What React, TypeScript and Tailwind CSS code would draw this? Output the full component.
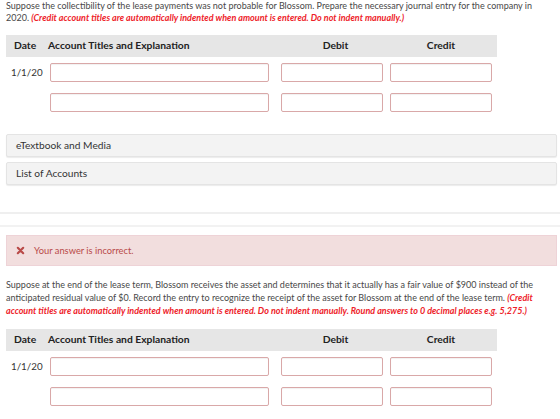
const inputCls =
  "h-[19px] rounded-[2px] border border-[#d9a8a8] bg-white shadow-[inset_0_1px_1px_rgba(0,0,0,0.06)]";

function JournalTable() {
  const rows = ["1/1/20", ""];
  return (
    <div className="w-[491px]">
      <div className="flex h-[22px] items-center bg-[#e6e6e6] text-[10.3px] font-bold text-[#222]">
        <div className="w-[42px] pl-[8px]">Date</div>
        <div className="w-[233px]">Account Titles and Explanation</div>
        <div className="w-[109px] text-center">Debit</div>
        <div className="w-[102px] text-center">Credit</div>
      </div>
      <div className="flex flex-col gap-[11px] pt-[6px]">
        {rows.map((d, i) => (
          <div key={i} className="flex items-center">
            <div className="w-[44px] pl-[5px] text-[9.8px] text-[#333]">{d}</div>
            <div className={`${inputCls} w-[219px]`} />
            <div className={`${inputCls} ml-[12px] w-[102px]`} />
            <div className={`${inputCls} ml-[7px] w-[102px]`} />
          </div>
        ))}
      </div>
    </div>
  );
}

function LinkBox({ label }: { label: string }) {
  return (
    <div className="flex h-[23px] items-center rounded-[2px] border border-[#e4e4e4] bg-[#f3f3f3] pl-[9px] text-[10.2px] text-[#333] shadow-[0_1px_1px_rgba(0,0,0,0.08)]">
      {label}
    </div>
  );
}

export default function App() {
  return (
    <div className="h-[419px] w-[560px] overflow-hidden bg-white font-['Lato',sans-serif] leading-[11.5px]">
      <div className="px-[6px] text-[9px] leading-[11.5px] text-[#484848]">
        Suppose the collectibility of the lease payments was not probable for Blossom. Prepare the
        necessary journal entry for the company in 2020.{" "}
        <span className="font-bold italic text-[#ee2229]">
          (Credit account titles are automatically indented when amount is entered. Do not indent
          manually.)
        </span>
      </div>

      <div className="mt-[12px] px-[6px]">
        <JournalTable />
      </div>

      <div className="mt-[22px] flex flex-col gap-[5px] px-[6px] pr-[3px]">
        <LinkBox label="eTextbook and Media" />
        <LinkBox label="List of Accounts" />
      </div>

      <div className="mt-[27px] h-[2px] bg-[#efefef]" />
      <div className="mt-[11px] h-[2px] bg-[#f2f2f2]" />

      <div className="mx-[6px] mr-[3px] mt-[8px] flex h-[31px] items-center border border-[#eed3d7] bg-[#f2dede] pl-[9px] text-[9.3px] text-[#b94a48]">
        <svg viewBox="0 0 10 10" className="mr-[9px] h-[9px] w-[9px]">
          <path d="M2 2 L8 8 M8 2 L2 8" stroke="#b94a48" strokeWidth="2.4" strokeLinecap="round" />
        </svg>
        Your answer is incorrect.
      </div>

      <div className="mt-[12px] px-[6px] text-[9px] leading-[13px] text-[#484848]">
        Suppose at the end of the lease term, Blossom receives the asset and determines that it
        actually has a fair value of $900 instead of the anticipated residual value of $0. Record
        the entry to recognize the receipt of the asset for Blossom at the end of the lease term.{" "}
        <span className="font-bold italic text-[#ee2229]">
          (Credit account titles are automatically indented when amount is entered. Do not indent
          manually. Round answers to 0 decimal places e.g. 5,275.)
        </span>
      </div>

      <div className="mt-[12px] px-[6px]">
        <JournalTable />
      </div>
    </div>
  );
}
